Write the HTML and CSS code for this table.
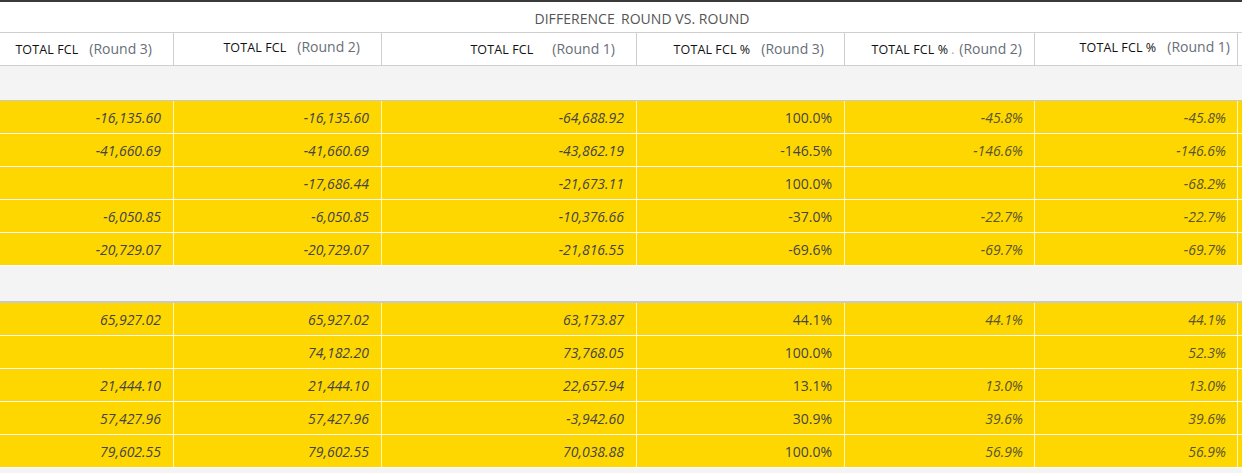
FILE: index.html
```html
<!DOCTYPE html>
<html lang="en">
<head>
<meta charset="utf-8">
<title>Difference Round vs. Round</title>
<link rel="stylesheet" href="styles.css">
</head>
<body>
<div class="sheet">
  <div class="title-row"><span class="title">DIFFERENCE<span class="faint">.</span>ROUND VS. ROUND</span></div>

  <div class="row head">
    <div class="hc p21"><span class="lbl">TOTAL FCL</span><span class="rnd">(Round 3)</span></div>
    <div class="hc p21 up"><span class="lbl">TOTAL FCL</span><span class="rnd">(Round 2)</span></div>
    <div class="hc p21"><span class="lbl wide">TOTAL FCL</span><span class="rnd">(Round 1)</span></div>
    <div class="hc p20"><span class="lbl">TOTAL FCL %</span><span class="rnd">(Round 3)</span></div>
    <div class="hc p13"><span class="lbl tight">TOTAL FCL %</span><span class="dot">.</span><span class="rnd">(Round 2)</span></div>
    <div class="hc p7 up"><span class="lbl">TOTAL FCL %</span><span class="rnd">(Round 1)</span></div>
    <div class="hc last"></div>
  </div>

  <div class="group-row first"></div>

  <div class="row data">
    <div class="c it">-16,135.60</div><div class="c it">-16,135.60</div><div class="c it">-64,688.92</div><div class="c">100.0%</div><div class="c it soft">-45.8%</div><div class="c it soft">-45.8%</div><div class="c last"></div>
  </div>
  <div class="row data">
    <div class="c it">-41,660.69</div><div class="c it">-41,660.69</div><div class="c it">-43,862.19</div><div class="c">-146.5%</div><div class="c it soft">-146.6%</div><div class="c it soft">-146.6%</div><div class="c last"></div>
  </div>
  <div class="row data">
    <div class="c it"></div><div class="c it">-17,686.44</div><div class="c it">-21,673.11</div><div class="c">100.0%</div><div class="c it soft"></div><div class="c it soft">-68.2%</div><div class="c last"></div>
  </div>
  <div class="row data">
    <div class="c it">-6,050.85</div><div class="c it">-6,050.85</div><div class="c it">-10,376.66</div><div class="c">-37.0%</div><div class="c it soft">-22.7%</div><div class="c it soft">-22.7%</div><div class="c last"></div>
  </div>
  <div class="row data">
    <div class="c it">-20,729.07</div><div class="c it">-20,729.07</div><div class="c it">-21,816.55</div><div class="c">-69.6%</div><div class="c it soft">-69.7%</div><div class="c it soft">-69.7%</div><div class="c last"></div>
  </div>

  <div class="group-row second"></div>

  <div class="row data">
    <div class="c it">65,927.02</div><div class="c it">65,927.02</div><div class="c it">63,173.87</div><div class="c">44.1%</div><div class="c it soft">44.1%</div><div class="c it soft">44.1%</div><div class="c last"></div>
  </div>
  <div class="row data">
    <div class="c it"></div><div class="c it">74,182.20</div><div class="c it">73,768.05</div><div class="c">100.0%</div><div class="c it soft"></div><div class="c it soft">52.3%</div><div class="c last"></div>
  </div>
  <div class="row data">
    <div class="c it">21,444.10</div><div class="c it">21,444.10</div><div class="c it">22,657.94</div><div class="c">13.1%</div><div class="c it soft">13.0%</div><div class="c it soft">13.0%</div><div class="c last"></div>
  </div>
  <div class="row data">
    <div class="c it">57,427.96</div><div class="c it">57,427.96</div><div class="c it">-3,942.60</div><div class="c">30.9%</div><div class="c it soft">39.6%</div><div class="c it soft">39.6%</div><div class="c last"></div>
  </div>
  <div class="row data">
    <div class="c it">79,602.55</div><div class="c it">79,602.55</div><div class="c it">70,038.88</div><div class="c">100.0%</div><div class="c it soft">56.9%</div><div class="c it soft">56.9%</div><div class="c last"></div>
  </div>

  <div class="tail"></div>
</div>
</body>
</html>
```

FILE: styles.css
```css
* {
  box-sizing: border-box;
}

html, body {
  margin: 0;
  padding: 0;
  background: #f4f4f4;
  overflow: hidden;
}

body {
  font-family: "Open Sans", "Noto Sans", "DejaVu Sans", sans-serif;
  width: 1242px;
  height: 473px;
}

.sheet {
  width: 1242px;
  border-top: 2px solid #3a3a3a;
  background: #fff;
}

.title-row {
  height: 31px;
  padding: 5px 0 0 42px;
  text-align: center;
  border-bottom: 1px solid #cfcfcf;
  background: #fff;
}

.title {
  font-size: 14px;
  line-height: 19px;
  letter-spacing: 0.05px;
  color: #555;
  display: inline-block;
}

.title .faint {
  color: #d8d8d8;
  font-size: 8px;
  margin: 0 3px 0 1px;
}

.row {
  display: grid;
  grid-template-columns: 174px 208px 255px 208px 190px 203px 1fr;
}

.head {
  height: 33px;
  border-bottom: 1px solid #cfcfcf;
  background: #fff;
}

.hc {
  display: flex;
  justify-content: flex-end;
  align-items: baseline;
  border-right: 1px solid #cfcfcf;
  line-height: 32px;
  white-space: nowrap;
}

.hc.last {
  border-right: none;
}

.hc.up {
  line-height: 28px;
}

.hc.p21 { padding-right: 21px; }
.hc.p20 { padding-right: 20px; }
.hc.p13 { padding-right: 12px; }
.hc.p7 { padding-right: 7px; }

.lbl {
  font-size: 12.5px;
  color: #111;
  letter-spacing: 0.1px;
  margin-right: 11px;
}

.lbl.wide {
  margin-right: 19px;
}

.lbl.tight {
  margin-right: 3px;
}

.dot {
  font-size: 12px;
  color: #9a9a9a;
  margin-right: 5px;
}

.rnd {
  font-size: 14px;
  color: #676e78;
}

.group-row {
  background: #f4f4f4;
  border-bottom: 1px solid #c8c8c8;
}

.group-row.first {
  height: 35px;
}

.group-row.second {
  height: 37px;
  border-bottom: 2px solid #c8c8c8;
}

.data {
  height: 33px;
  background: #ffd700;
  border-bottom: 1px solid #fff;
}

.c {
  font-size: 14px;
  line-height: 30px;
  padding: 2px 12px 0 0;
  text-align: right;
  color: #444;
  border-right: 1px solid rgba(255, 255, 255, 0.75);
  white-space: nowrap;
}

.c.last {
  border-right: none;
}

.c.it {
  font-style: italic;
}

.c.soft {
  color: #58552f;
  padding-right: 11px;
}

.tail {
  height: 10px;
  background: #f4f4f4;
}
```
